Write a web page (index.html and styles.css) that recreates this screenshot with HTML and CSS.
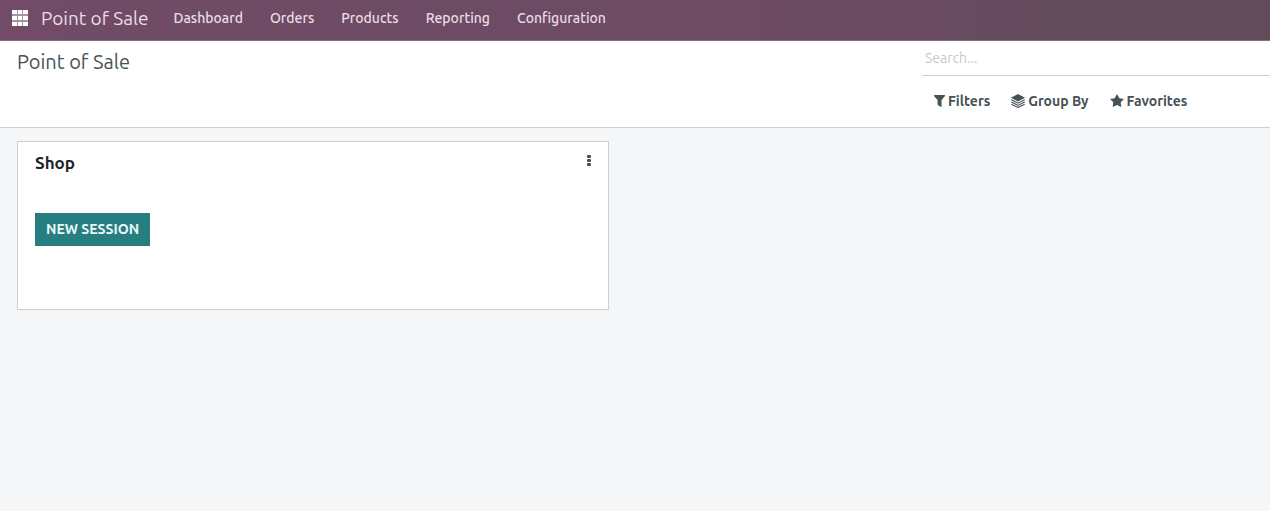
FILE: index.html
```html
<!DOCTYPE html>
<html lang="en">
<head>
  <meta charset="UTF-8" />
  <meta name="viewport" content="width=device-width, initial-scale=1.0"/>
  <title>Point of Sale</title>
  <link rel="stylesheet" href="styles.css">
</head>
<body>
  <header class="navbar">
    <button class="apps-toggle" type="button" aria-label="Home menu">
      <svg width="16" height="16" viewBox="0 0 16 16" fill="currentColor" aria-hidden="true">
        <path opacity=".4" d="M0 0h16v16H0z"/>
        <path d="M0 0h5v4H0zM6 0h4v4H6zM11 0h5v4h-5zM0 6h5v4H0zM6 6h4v4H6zM11 6h5v4h-5zM0 12h5v4H0zM6 12h4v4H6zM11 12h5v4h-5z"/>
      </svg>
    </button>
    <a class="brand" href="#">Point of Sale</a>
    <nav class="menu">
      <a href="#">Dashboard</a>
      <a href="#">Orders</a>
      <a href="#">Products</a>
      <a href="#">Reporting</a>
      <a href="#">Configuration</a>
    </nav>
  </header>

  <section class="control-panel">
    <h1 class="page-title">Point of Sale</h1>
    <div class="search">
      <input class="search-input" type="text" placeholder="Search..." aria-label="Search" />
      <div class="search-options">
        <button type="button">
          <svg width="11" height="12" viewBox="0 0 11 12" fill="currentColor" aria-hidden="true">
            <path d="M.5 0h10c.6 0 .7.8.3 1.200L7.500 4.900V11.400c0 .5-.5.7-.9.4L3.900 10.100A.8.8 0 0 1 3.600 9.500V4.900L.2 1.200C-.2.800 0 0 .5 0z"/>
          </svg>
          Filters
        </button>
        <button type="button">
          <svg width="14" height="14" viewBox="0 0 14 14" fill="currentColor" aria-hidden="true">
            <path d="M7 0 14 3.700 7 7.400 0 3.700z"/>
            <path d="M.3 5.800 7 9.200 13.700 5.800M.3 8 7 11.400 13.700 8M.3 10.200 7 13.500 13.700 10.200" fill="none" stroke="currentColor" stroke-width="1.100"/>
          </svg>
          Group By
        </button>
        <button type="button">
          <svg width="14" height="14" viewBox="0 0 14 14" fill="currentColor" aria-hidden="true">
            <path d="M7 0 9.300 4.200 14 5 10.700 8.300 11.400 13 7 10.900 2.600 13 3.300 8.300 0 5 4.700 4.200z"/>
          </svg>
          Favorites
        </button>
      </div>
    </div>
  </section>

  <main class="kanban">
    <article class="card">
      <div class="card-header">
        <h2>Shop</h2>
        <button class="card-menu" type="button" aria-label="Shop options">
          <svg width="4" height="12" viewBox="0 0 4 12" fill="currentColor" aria-hidden="true">
            <rect width="4" height="3" rx="1"/>
            <rect y="4" width="4" height="3" rx="1"/>
            <rect y="8" width="4" height="3" rx="1"/>
          </svg>
        </button>
      </div>
      <button class="btn-primary" type="button">NEW SESSION</button>
    </article>
  </main>
</body>
</html>
```
FILE: styles.css
```css
* {
  box-sizing: border-box;
}

body {
  margin: 0;
  min-height: 100vh;
  font-family: Ubuntu, "Noto Sans", sans-serif;
  font-size: 14px;
  line-height: 20px;
  color: #475257;
  background-color: #f5f6f8;
}

a {
  color: inherit;
  text-decoration: none;
}

button {
  padding: 0;
  border: none;
  background: none;
  color: inherit;
  font: inherit;
  cursor: pointer;
}

svg {
  display: block;
}

/* Top bar */
.navbar {
  display: flex;
  align-items: center;
  height: 41px;
  padding: 0 12px 4px;
  color: #eadde6;
  background: linear-gradient(to right, #714b67, #6b4b62 70%, #624c5c 85%, #624c5c);
  border-bottom: 1px solid #857080;
}

.apps-toggle {
  color: #fff;
}

.brand {
  margin: 0 25px 0 13px;
  font-size: 19px;
}

.menu {
  display: flex;
  gap: 27px;
  font-weight: 500;
}

/* Title and search */
.control-panel {
  display: flex;
  justify-content: space-between;
  min-height: 87px;
  padding-left: 17px;
  background-color: #fff;
  border-bottom: 1px solid #ced1d4;
}

.page-title {
  margin: 8px 0 0;
  font-size: 20px;
  font-weight: 400;
  line-height: 26px;
}

.search {
  width: 348px;
}

.search-input {
  display: block;
  width: 100%;
  height: 35px;
  padding: 0 3px;
  border: none;
  border-bottom: 1px solid #ced1d4;
  background: none;
  color: inherit;
  font: inherit;
  outline: none;
}

.search-input::placeholder {
  color: #c3cac9;
  opacity: 1;
}

.search-options {
  display: flex;
  gap: 21px;
  padding: 15px 12px;
}

.search-options button {
  display: flex;
  align-items: center;
  gap: 3px;
  font-weight: 600;
}

/* Cards */
.kanban {
  padding: 13px 17px;
}

.card {
  width: calc(50% - 26px);
  min-width: 320px;
  min-height: 169px;
  padding: 8px 17px;
  background-color: #fff;
  border: 1px solid #ced1d4;
}

.card-header {
  display: flex;
  justify-content: space-between;
  align-items: flex-start;
  margin-bottom: 37px;
}

.card-header h2 {
  margin: 0;
  color: #212529;
  font-size: 17px;
  font-weight: 600;
  line-height: 26px;
}

.card-menu {
  padding: 5px 0;
}

.btn-primary {
  height: 33px;
  padding: 0 11px 1px;
  background-color: #277e80;
  color: #e9f8f8;
  font-weight: 600;
}
```
